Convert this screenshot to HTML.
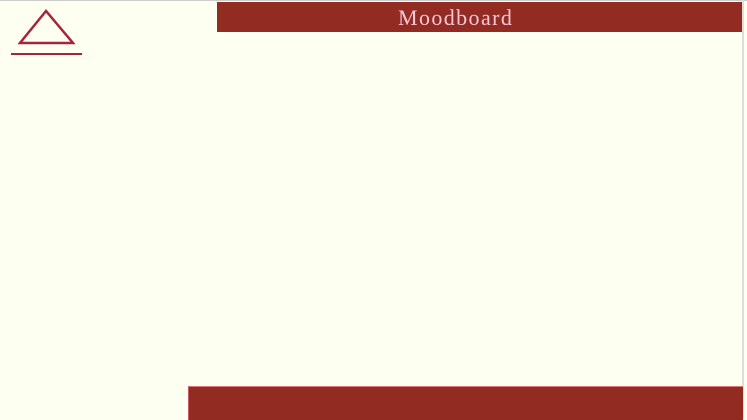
<!DOCTYPE html><html><head><style>
body{margin:0;width:747px;height:419px;background:#fdfff0;position:relative;overflow:hidden;font-family:"Liberation Serif",serif}
.top{position:absolute;left:217px;top:2px;width:525px;height:30px;background:#922b21;color:#f7c6d9;font-size:22px;line-height:31px}
.top span{position:absolute;left:181px;letter-spacing:1.4px}
.bot{position:absolute;left:188px;top:386px;width:554px;height:33px;background:#922b21;border-top:1px solid #d77;border-left:1px solid #c56}
.bt{position:absolute;left:0;top:0;width:747px;height:1px;background:#ccc}
.br{position:absolute;left:742px;top:0;width:2px;height:419px;background:#ddd}
</style></head><body>
<div class="bt"></div><div class="br"></div>
<svg style="position:absolute;left:0;top:0" width="100" height="70"><polygon points="46,11 20,43 73,43" fill="none" stroke="#a5243a" stroke-width="2.5"/><line x1="11" y1="54" x2="82" y2="54" stroke="#a5243a" stroke-width="2"/></svg>
<div class="top"><span>Moodboard</span></div>
<div class="bot"></div>
</body></html>
